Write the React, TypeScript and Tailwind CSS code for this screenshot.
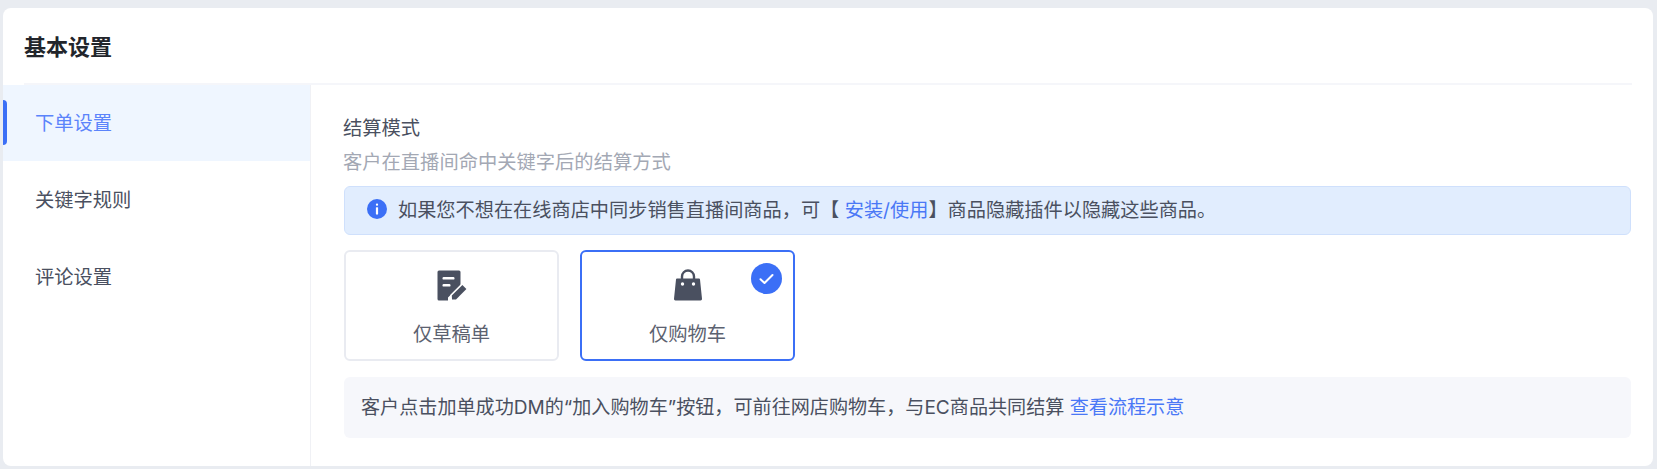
const FONT = "font-['Inter','Noto_Sans_CJK_SC',sans-serif]";

function DraftIcon() {
  return (
    <svg width="34" height="34" viewBox="0 0 34 34" fill="none">
      <path
        d="M4 2.5h20a1.5 1.5 0 0 1 1.5 1.5v13L13 29.5v3H4A1.5 1.5 0 0 1 2.5 31V4A1.5 1.5 0 0 1 4 2.5z"
        fill="#4A5060"
      />
      <rect x="7.5" y="9" width="12" height="2.6" rx="1.2" fill="#fff" />
      <rect x="7.5" y="16" width="8" height="2.6" rx="1.2" fill="#fff" />
      <path d="M15.5 33l-.3-6L27.4 14.8l5.8 5.8L21 33z" fill="#fff" />
      <path d="M17 31.6l-.2-4L27.4 17l4 4L21 31.6z" fill="#4A5060" />
    </svg>
  );
}

function BagIcon() {
  return (
    <svg width="32" height="34" viewBox="0 0 32 34" fill="none">
      <path d="M10 12V8.5a6 6 0 0 1 12 0V12" stroke="#4A5060" strokeWidth="2.4" />
      <path
        d="M5 10.5h22a1 1 0 0 1 1 .9l2 19.4a1.5 1.5 0 0 1-1.5 1.7h-25A1.5 1.5 0 0 1 2 30.8l2-19.4a1 1 0 0 1 1-.9z"
        fill="#4A5060"
      />
      <circle cx="10.5" cy="16" r="1.7" fill="#fff" />
      <circle cx="21.5" cy="16" r="1.7" fill="#fff" />
    </svg>
  );
}

export default function App() {
  return (
    <div className={`w-[1657px] h-[469px] bg-[#E9ECF1] pt-2 pb-[3px] pl-[3px] pr-1 ${FONT}`}>
      <div className="h-full bg-white rounded-lg flex flex-col overflow-hidden">
        <div className="h-[77px] shrink-0 mx-[21px] flex items-center border-b-2 border-[#F5F6FA]">
          <h1 className="text-[22px] font-bold text-[#22252B] pt-[3px]">基本设置</h1>
        </div>

        <div className="flex flex-1 min-h-0">
          <div className="w-[308px] shrink-0 border-r border-[#F0F1F5]">
            <div className="h-[76px] bg-[#EFF6FF] flex items-center pl-[32px] relative text-[19.3px] text-[#5B84FB]">
              <span className="absolute left-0 top-[15px] w-1 h-[45px] bg-[#3B6FF6] rounded-r-sm"></span>
              下单设置
            </div>
            <div className="mt-px h-[77px] flex items-center pl-[32px] text-[19.3px] text-[#4A5060]">关键字规则</div>
            <div className="h-[77px] flex items-center pl-[32px] text-[19.3px] text-[#4A5060]">评论设置</div>
          </div>

          <div className="flex-1 min-w-0 pl-[33px] pr-[22px] pt-[26px]">
            <div className="text-[19.3px] leading-[35px] text-[#4A5060] -ml-px">结算模式</div>
            <div className="text-[19.3px] leading-[33px] text-[#A3A8B4] -ml-px">客户在直播间命中关键字后的结算方式</div>

            <div className="mt-[7px] h-[49px] bg-[#E1EDFE] border border-[#CFE0FC] rounded-md flex items-center pl-[22px] text-[19.2px] text-[#4A5060]">
              <svg width="20" height="20" viewBox="0 0 20 20" className="mr-[11px] shrink-0 -mt-[3px]">
                <circle cx="10" cy="10" r="10" fill="#3B6FF6" />
                <rect x="8.9" y="4.4" width="2.2" height="2.4" rx="1" fill="#fff" />
                <rect x="8.9" y="8.2" width="2.2" height="7.4" rx="0.6" fill="#fff" />
              </svg>
              <span>
                如果您不想在在线商店中同步销售直播间商品，可【 <span className="text-[#4A78F6]">安装/使用</span>】商品隐藏插件以隐藏这些商品。
              </span>
            </div>

            <div className="mt-[15px] flex gap-[21px]">
              <div className="w-[215px] h-[111px] rounded-md border-2 border-[#E9EBF1] flex flex-col items-center pt-[16px]">
                <DraftIcon />
                <span className="mt-[19px] text-[19.3px] leading-[26px] text-[#5C6270]">仅草稿单</span>
              </div>
              <div className="w-[215px] h-[111px] rounded-md border-2 border-[#3B6FF6] flex flex-col items-center pt-[16px] relative">
                <BagIcon />
                <span className="mt-[19px] text-[19.3px] leading-[26px] text-[#5C6270]">仅购物车</span>
                <span className="absolute right-[11px] top-[11px] w-[31px] h-[31px] rounded-full bg-[#3B6FF6] flex items-center justify-center">
                  <svg width="15" height="12" viewBox="0 0 15 12" fill="none">
                    <path d="M1.5 6.2l4 3.8 8-8" stroke="#fff" strokeWidth="2" strokeLinecap="round" strokeLinejoin="round" />
                  </svg>
                </span>
              </div>
            </div>

            <div className="mt-[16px] h-[61px] bg-[#F6F7FB] rounded-md flex items-center pl-[17px] text-[19.1px] text-[#4A5060]">
              <span>
                客户点击加单成功DM的“加入购物车”按钮，可前往网店购物车，与EC商品共同结算 <span className="text-[#4A78F6]">查看流程示意</span>
              </span>
            </div>
          </div>
        </div>
      </div>
    </div>
  );
}
